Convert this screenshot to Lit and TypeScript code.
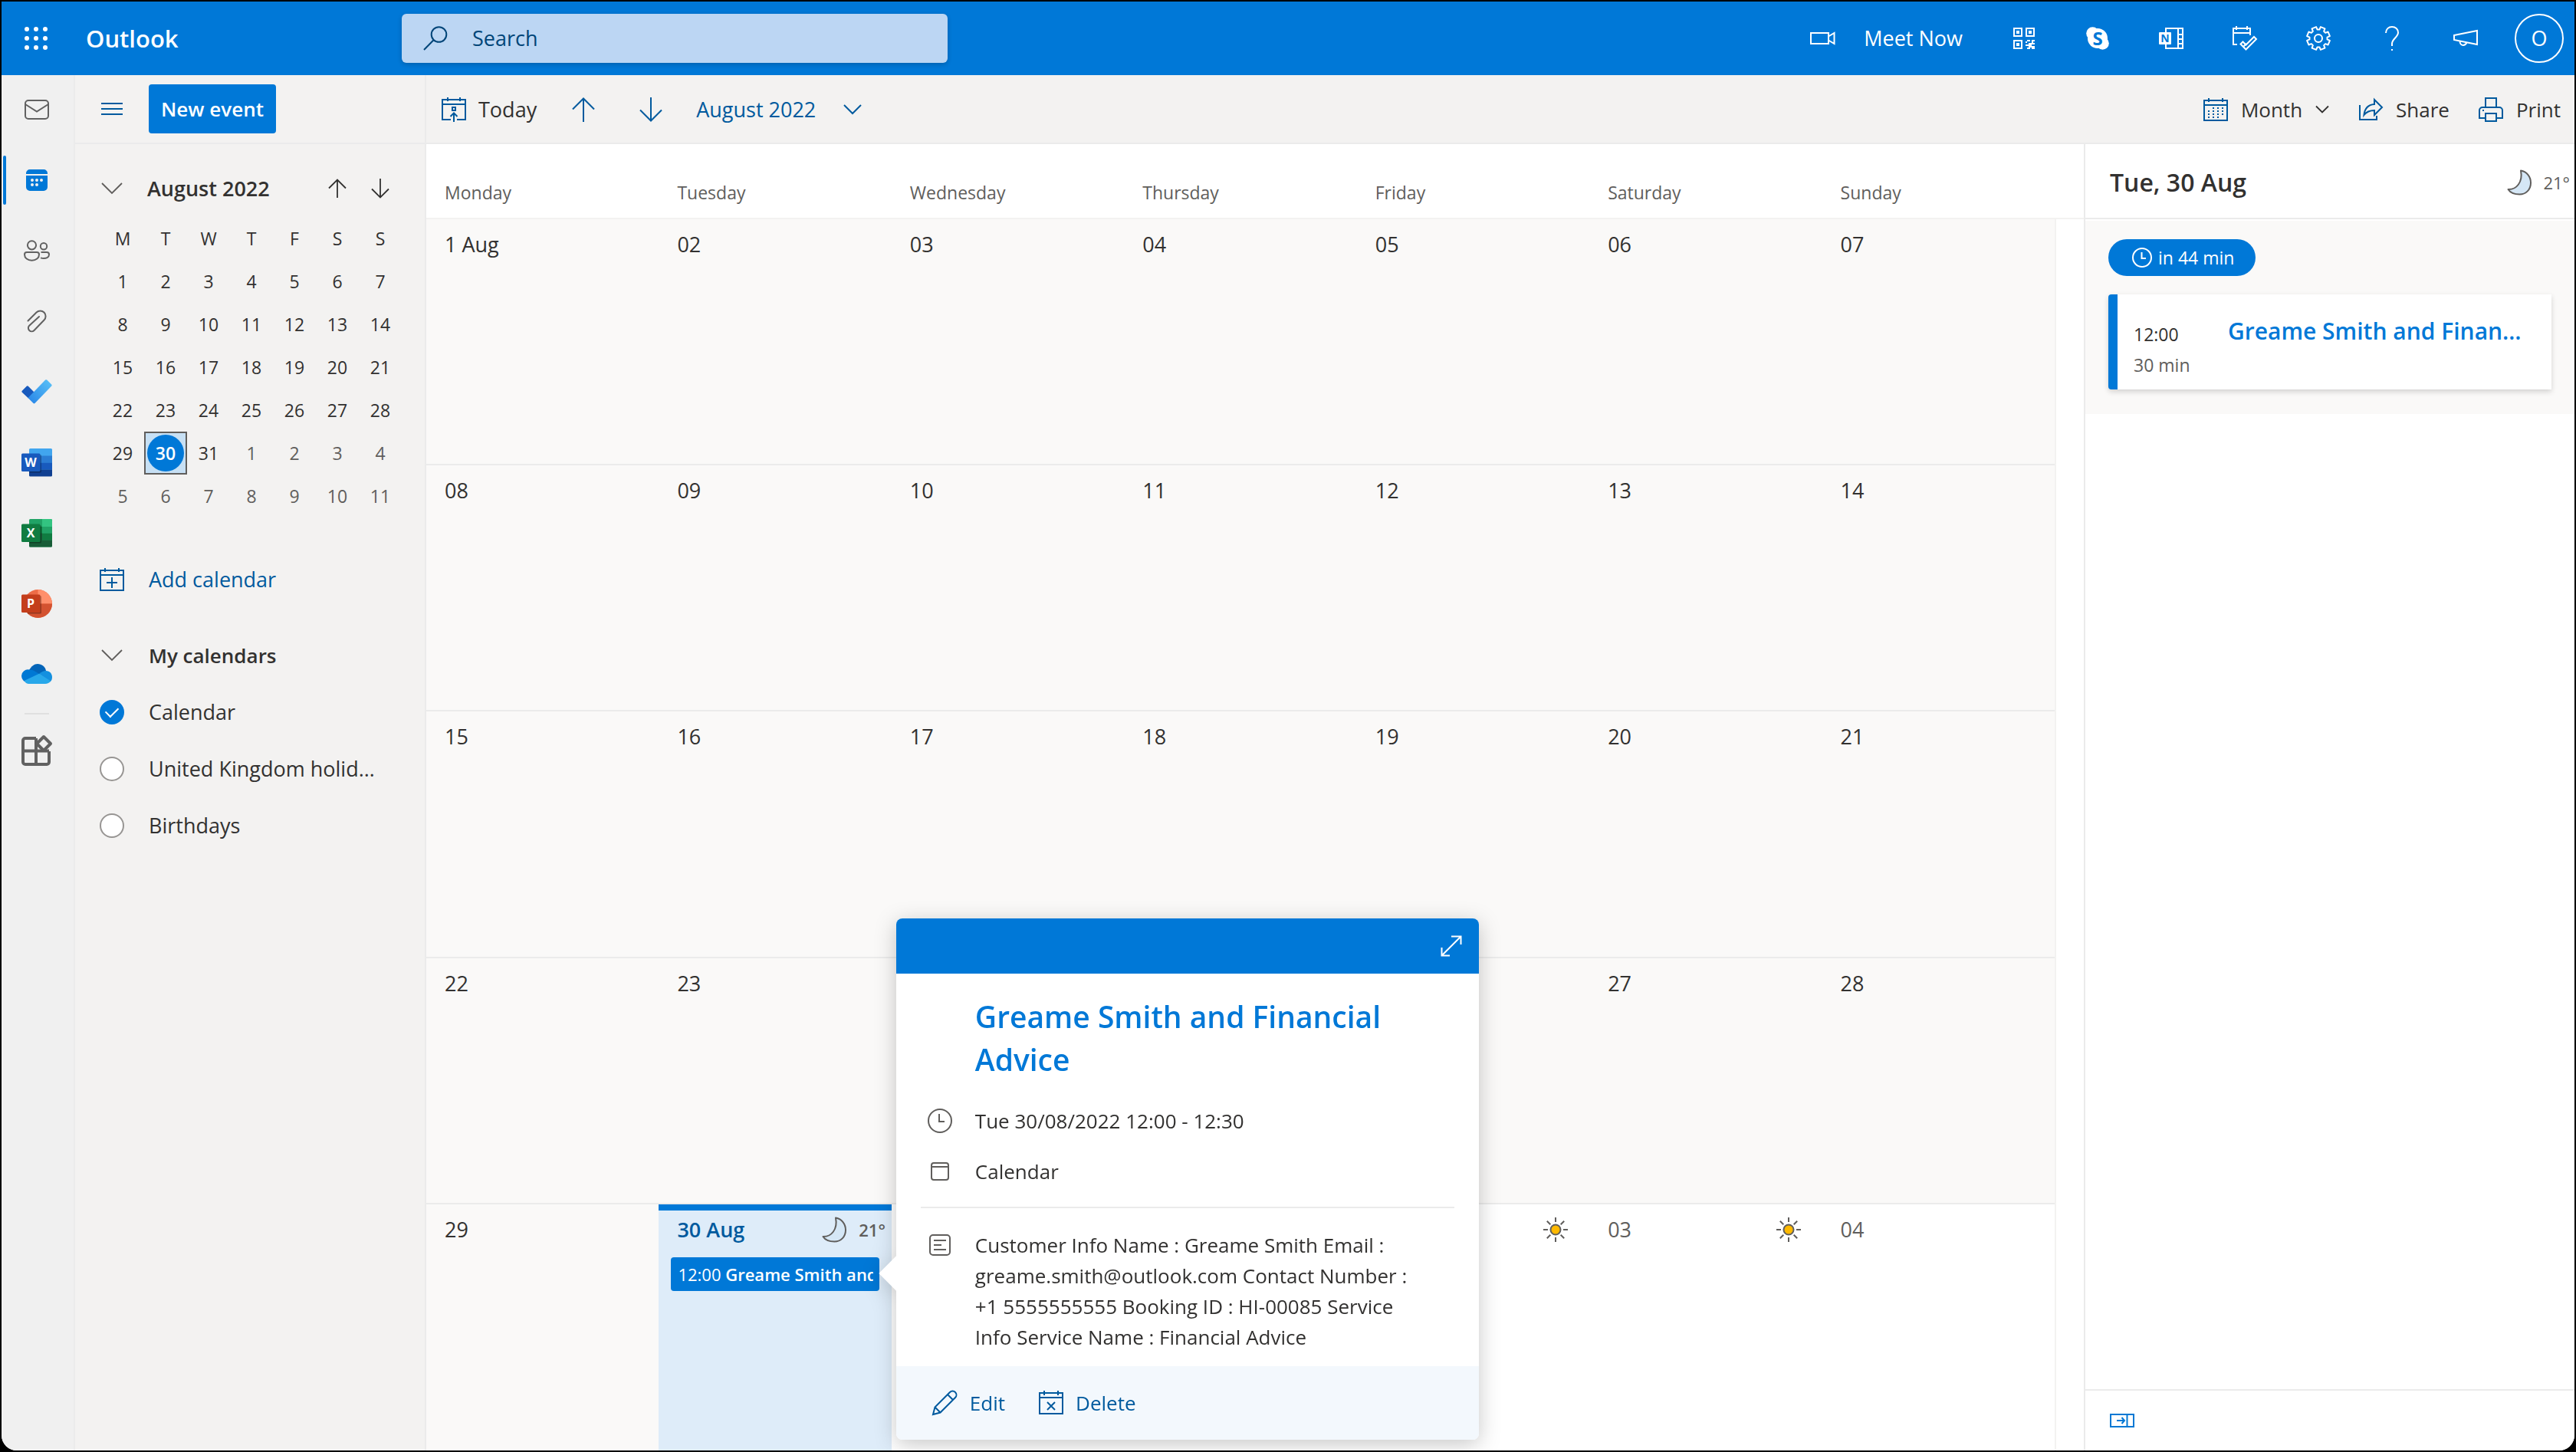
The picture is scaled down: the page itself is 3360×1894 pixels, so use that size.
import { LitElement, html, svg, css, nothing, type TemplateResult } from "lit";
import { customElement, state } from "lit/decorators.js";
import { classMap } from "lit/directives/class-map.js";

/* ---------- icons ---------- */

const icon = (w: number, h: number, body: unknown, cls = "") =>
  html`<svg class="icon ${cls}" width=${w} height=${h} viewBox="0 0 ${w} ${h}" fill="none"
    stroke="currentColor" stroke-width="2" aria-hidden="true">${body}</svg>`;

const gearOutline = (() => {
  const pts: string[] = [];
  const teeth = 8;
  for (let i = 0; i < teeth; i++) {
    const mid = (i * 2 * Math.PI) / teeth + Math.PI / 8;
    const steps: [number, number][] = [[-0.27, 11.6], [-0.2, 15.2], [0.2, 15.2], [0.27, 11.6]];
    for (const [da, r] of steps) {
      pts.push(`${(16 + r * Math.sin(mid + da)).toFixed(2)} ${(16 - r * Math.cos(mid + da)).toFixed(2)}`);
    }
  }
  return `M${pts.join("L")}Z`;
})();

const waffle = () =>
  icon(30, 30, svg`<g fill="currentColor" stroke="none">${[3, 15, 27].map((y) =>
    [3, 15, 27].map((x) => svg`<circle cx=${x} cy=${y} r="3"/>`))}</g>`);

const icons = {
  search: () => icon(32, 32, svg`<circle cx="20.5" cy="11" r="9.8"/><path d="M13.5 18.2L1 31"/>`),
  video: () => icon(34, 18, svg`<path d="M2 2h23v14H2zM25 6.5l7.5-4.5v14L25 11.5"/>`),
  qr: () => icon(28, 28, svg`<path d="M1 1h10v10H1zM17 1h10v10H17zM1 17h10v10H1z"/>
    <path fill="currentColor" stroke="none" d="M4 4h4v4H4zM20 4h4v4h-4zM4 20h4v4H4zM18 16h4v2h-4zM24 16h4v2h-2v2h-2zM16 18h2v2h-2zM20 18h2v2h4v2h-2v2h4v2h-2v2h-2v-2h-2v2h-4v-2h2v-2h-2v-2h2v-2h2v-2zM26 20h2v2h-2zM26 26h2v2h-2zM16 22h2v2h-2z"/>`),
  skype: () => icon(30, 30, svg`<g fill="currentColor" stroke="none"><circle cx="15" cy="15" r="13"/><circle cx="8.5" cy="8.5" r="8.3"/><circle cx="21.5" cy="21.5" r="8.3"/></g>
    <text class="logo-letter" x="15" y="23.5" font-size="24" fill="#0078d7" stroke="none">S</text>`),
  onenote: () => icon(32, 28, svg`<path d="M9 6V1h22v26H9v-5M25 1v26M25 9h6M25 15h6M25 21h6"/>
    <rect x="0" y="6" width="16" height="16" rx="1" fill="currentColor" stroke="none"/>
    <text class="logo-letter" x="8" y="19" font-size="14" fill="#0078d7" stroke="none">N</text>`),
  calendarCheck: () => icon(32, 32, svg`<path d="M6 24H1V3h22v9M1 9h22M5 0v5M19 0v5"/>
    <path d="M10.5 23.5l3-3 4 4L28 14l3 3-13.500 13.500z"/><path d="M14 27l4-4"/>`),
  gear: () => icon(32, 32, svg`<path stroke-linejoin="round" d=${gearOutline}/><circle cx="16" cy="16" r="5"/>`),
  help: () => icon(18, 32, svg`<path d="M1 9c0-5 3.500-8 8-8s8 3 8 7.500c0 6-8 8-8 14.500v3M9 30v2"/>`),
  megaphone: () => icon(32, 22, svg`<path d="M1 7l30-6v18L1 13zM8.500 15c0 3 2 5 4.500 5s3.500-1.500 4.500-3.500"/>`),
  mail: () => icon(32, 26, svg`<rect x="1" y="1" width="30" height="24" rx="4"/><path d="M1 6l15 9.500L31 6"/>`),
  calendarSolid: () => icon(28, 28, svg`<g stroke="none"><path fill="currentColor" d="M0 6V5a5 5 0 0 1 5-5h18a5 5 0 0 1 5 5v1zM0 8h28v15a5 5 0 0 1-5 5H5a5 5 0 0 1-5-5z"/>
    <g fill="#f0f0f0"><circle cx="8" cy="14" r="2"/><circle cx="14" cy="14" r="2"/><circle cx="20" cy="14" r="2"/><circle cx="8" cy="20" r="2"/><circle cx="14" cy="20" r="2"/></g></g>`),
  people: () => icon(34, 28, svg`<circle cx="10.500" cy="6.800" r="5.600"/><circle cx="26" cy="8.200" r="4.200"/>
    <path d="M4 16h13a3 3 0 0 1 3 3c0 4.500-4 7.800-9.500 7.800S1 23.500 1 19a3 3 0 0 1 3-3zM22.500 16H30a3 3 0 0 1 3 3c0 3.500-3.500 5-7 5-1.500 0-2.500-.2-4-.6"/>`),
  clip: () => icon(26, 30, svg`<path stroke-linecap="round" d="M1.500 14.500L12.500 3.500a7 7 0 0 1 10 10L9.500 27a4.400 4.400 0 0 1-6.300-6.300L16 9"/>`),
  todo: () => icon(40, 32, svg`<g stroke="none"><path fill="#185abd" d="M.8 14.800l6-6a1.500 1.500 0 0 1 2 0L17 17l-8 7.500-8.200-7.700a1.500 1.500 0 0 1 0-2z"/>
    <path fill="url(#todo-g)" d="M31.200.6a1.500 1.500 0 0 1 2 0l6 6a1.500 1.500 0 0 1 0 2L17.500 31a1.500 1.500 0 0 1-2 0L8.500 24z"/></g>
    <defs><linearGradient id="todo-g" x1="9" y1="28" x2="38" y2="2" gradientUnits="userSpaceOnUse"><stop stop-color="#2a87e8"/><stop offset="1" stop-color="#58c0f7"/></linearGradient></defs>`),
  word: () => icon(40, 37, svg`<g stroke="none"><rect x="10" width="30" height="36" rx="1.500" fill="#41a5ee"/><path fill="#2b7cd3" d="M10 9.500h30v9H10z"/><path fill="#185abd" d="M10 18.500h30v9H10z"/><path fill="#103f91" d="M10 27.500h30V35a1.500 1.500 0 0 1-1.500 1.500h-27A1.500 1.500 0 0 1 10 35z"/>
    <path fill="#000" opacity=".3" d="M10 8h14.500a1.500 1.500 0 0 1 1.500 1.500V30a1.500 1.500 0 0 1-1.500 1.500H10z"/><rect y="6.500" width="24.500" height="23.500" rx="1.500" fill="#185abd"/>
    <text class="logo-letter" x="12" y="24" font-size="16" fill="#fff">W</text></g>`),
  excel: () => icon(40, 37, svg`<g stroke="none"><rect x="10" width="30" height="36.500" rx="1.500" fill="#21a366"/><path fill="#33c481" d="M27 0h11.500A1.500 1.500 0 0 1 40 1.500V10H27z"/><path fill="#107c41" d="M27 18.500h13v9H27zM10 10h17v9H10z"/><path fill="#21a366" d="M27 10h13v8.500H27z"/><path fill="#185c37" d="M10 18.500h17v9h13V35a1.500 1.500 0 0 1-1.500 1.500h-27A1.500 1.500 0 0 1 10 35z"/>
    <path fill="#000" opacity=".3" d="M10 8h14.500a1.500 1.500 0 0 1 1.500 1.500V30a1.500 1.500 0 0 1-1.500 1.500H10z"/><rect y="6.500" width="24.500" height="23.500" rx="1.500" fill="#107c41"/>
    <text class="logo-letter" x="12" y="24" font-size="16" fill="#fff">X</text></g>`),
  powerpoint: () => icon(40, 37, svg`<g stroke="none"><circle cx="21.500" cy="18.500" r="18.500" fill="#ed6c47"/><path fill="#ff8f6b" d="M21.500 0A18.500 18.500 0 0 1 40 18.500H21.500z"/><path fill="#d35230" d="M3 18.500h37a18.500 18.500 0 0 1-37 0z"/>
    <path fill="#000" opacity=".3" d="M8 8h16.500a1.500 1.500 0 0 1 1.500 1.500V30a1.500 1.500 0 0 1-1.500 1.500H8z"/><rect y="6.500" width="24.500" height="23.500" rx="1.500" fill="#c43e1c"/>
    <text class="logo-letter" x="12" y="24" font-size="16" fill="#fff">P</text></g>`),
  onedrive: () => icon(40, 26, svg`<g stroke="none"><path fill="#0364b8" d="M10 8C13 3 16.500 0 21 0c5.500 0 10 3.500 11 9l-9 5z"/><path fill="#0078d4" d="M10 7.500c4 0 6 1 9 3l5 3L4 23a10 10 0 0 1-4-7.500 8.500 8.500 0 0 1 10-8z"/><path fill="#1490df" d="M32 9c5 0 8 4 8 8.500 0 2.500-1 4.500-2.500 6L23 13c3-2.500 6-4 9-4z"/><path fill="#28a8ea" d="M23 12.800l15 9.500c-1.500 2.500-4 3.700-7 3.700H9.500C7 26 5 24.800 3.500 22z"/></g>`),
  apps: () => icon(42, 42, svg`<g stroke-width="4" stroke-linejoin="round"><path d="M20 5H6a3 3 0 0 0-3 3v28a3 3 0 0 0 3 3h28a3 3 0 0 0 3-3V22M20 5v34M3 21.500h34"/><path fill="#f0f0f0" d="M30 3l9 9-9 9-9-9z"/></g>`),
  menu: () => icon(28, 18, svg`<path d="M0 2h28M0 9h28M0 16h28"/>`),
  chevronWide: () => icon(28, 16, svg`<path stroke="#605e5c" stroke-width="1.800" d="M1 1l13 13L27 1"/>`),
  chevronMid: () => icon(24, 16, svg`<path d="M1 2l11 11L23 2"/>`),
  chevronSmall: () => icon(18, 12, svg`<path stroke-width="1.800" d="M1 1.500l8 8 8-8"/>`),
  upSmall: () => icon(24, 26, svg`<path stroke-width="1.800" d="M12 25V2M1 12.500L12 1.500l11 11"/>`),
  downSmall: () => icon(24, 26, svg`<path stroke-width="1.800" d="M12 0v24M1 13.500l11 11 11-11"/>`),
  up: () => icon(30, 32, svg`<path d="M15 32V2M1 15.500l14-14 14 14"/>`),
  down: () => icon(30, 32, svg`<path d="M15 0v30M1 16.500l14 14 14-14"/>`),
  today: () => icon(32, 32, svg`<path d="M12 29H1V3h30v26H20M1 9h30M8 0v5M24 0v5M16 32V20.500M11.500 25l4.500-4.500 4.500 4.500M14 13h4v4h-4z"/>`),
  addCalendar: () => icon(32, 30, svg`<path d="M1 3h30v26H1zM1 9h30M7 0v5M25 0v5M16 12v14M9 19h14"/>`),
  deleteCalendar: () => icon(32, 32, svg`<path d="M1 3h30v27H1zM1 9h30M7 0v6M25 0v6M11 15l10 10M21 15L11 25"/>`),
  month: () => icon(32, 30, svg`<path d="M1 3h30v26H1zM1 9h30M7 0v5M25 0v5"/><g stroke-dasharray="2 4"><path d="M12 13h15M6 17h20M6 21h20M6 25h15"/></g>`),
  share: () => icon(32, 28, svg`<path d="M2 8v19h22v-5M21 1l10 10-10 10v-6c-6 0-10 1.500-13.500 6C8.500 12 13 7.500 21 7z"/>`),
  print: () => icon(32, 32, svg`<path d="M9 12V1h14v11M9 27H1V17a4 4 0 0 1 4-4h22a4 4 0 0 1 4 4v10h-8M9 21h14v10H9zM5 17h2"/>`),
  clock: () => icon(32, 32, svg`<circle cx="16" cy="16" r="15"/><path d="M15 7v10h7"/>`),
  clockSmall: () => icon(26, 26, svg`<circle cx="13" cy="13" r="12"/><path d="M12.500 6v8H18"/>`),
  calendarOutline: () => icon(24, 24, svg`<rect x="1" y="1" width="22" height="22" rx="3"/><path d="M1 6h22"/>`),
  notes: () => icon(28, 28, svg`<rect x="1" y="1" width="26" height="26" rx="4"/><path d="M6 8h16M6 14h10M6 20h16"/>`),
  pencil: () => icon(34, 34, svg`<path d="M2 32l2.500-9.500L24 3a4.500 4.500 0 0 1 7 7L11.500 29.500zM4.500 22.500l7 7M21 6l7 7"/>`),
  expand: () => icon(28, 28, svg`<path d="M2 26L26 2M14 1.500h12.500V12M1.500 16v10.500H12"/>`),
  collapse: () => icon(32, 18, svg`<path d="M1 1h30v16H1zM22.500 1v16M9 9h10M15.500 5L19 9l-3.500 4"/>`),
  moon: () => icon(32, 34, svg`<path fill="#d5e7f6" stroke="#605e5c" stroke-linejoin="round" d="M18 1.500c8 1.500 13 8 13 16 0 9-6.500 15-14.500 15C9.500 32.500 4 30 1.500 26 12 26.500 21 17 18 1.500z"/>`),
  sun: () => icon(32, 32, svg`<circle cx="16" cy="16" r="6.500" fill="#ffb900" stroke="#605e5c"/><path stroke="#605e5c" d="M16 0v6M16 26v6M0 16h6M26 16h6M4.800 4.800l4.500 4.500M22.700 22.700l4.500 4.500M27.200 4.800l-4.500 4.500M9.300 22.700l-4.500 4.500"/>`),
};

/* ---------- data ---------- */

const weekdays = ["Monday", "Tuesday", "Wednesday", "Thursday", "Friday", "Saturday", "Sunday"];
const miniDays = Array.from({ length: 42 }, (_, i) => (i < 31 ? i + 1 : i - 30));
const monthDays = Array.from({ length: 35 }, (_, i) => (i < 31 ? i + 1 : i - 30));
const weeks = <T,>(days: T[]) =>
  Array.from({ length: days.length / 7 }, (_, w) => days.slice(w * 7, w * 7 + 7));

const railApps: [string, () => TemplateResult][] = [
  ["Mail", icons.mail],
  ["Calendar", icons.calendarSolid],
  ["People", icons.people],
  ["Files", icons.clip],
  ["To Do", icons.todo],
  ["Word", icons.word],
  ["Excel", icons.excel],
  ["PowerPoint", icons.powerpoint],
  ["OneDrive", icons.onedrive],
];

const headerTools: [string, () => TemplateResult][] = [
  ["QR code", icons.qr],
  ["Skype", icons.skype],
  ["OneNote", icons.onenote],
  ["My Day", icons.calendarCheck],
  ["Settings", icons.gear],
  ["Help", icons.help],
  ["What's new", icons.megaphone],
];

/* ---------- shared styles ---------- */

const base = css`
  * { box-sizing: border-box; }
  button { font: inherit; color: inherit; background: none; border: 0; padding: 0; margin: 0; cursor: pointer;
    display: flex; align-items: center; white-space: nowrap; }
  h1, h2, h3, p { margin: 0; font: inherit; }
  .icon { display: block; flex: none; overflow: visible; }
  .logo-letter { font-family: "Open Sans", sans-serif; font-weight: 700; text-anchor: middle; }
`;

/* ---------- header ---------- */

@customElement("app-header")
class AppHeader extends LitElement {
  static styles = [base, css`
    :host { display: flex; align-items: center; height: 96px; background: #0078d7; color: #fff; }
    .waffle { width: 90px; height: 96px; justify-content: center; }
    .brand { width: 412px; padding-left: 20px; font-size: 31px; line-height: 48px; font-weight: 600; }
    .search { display: flex; align-items: center; gap: 32px; width: 712px; height: 64px; margin-left: 20px; padding: 0 28px;
      background: #bcd6f3; border-radius: 6px; color: #004578; box-shadow: 0 2px 6px rgba(0, 0, 0, .2); }
    .search input { flex: 1; min-width: 0; border: 0; outline: 0; padding: 0; background: none; font: inherit; color: inherit; }
    .search input::placeholder { color: #004578; opacity: 1; }
    .spacer { flex: 1; }
    .meet { gap: 37px; margin-right: 32px; }
    .tool { width: 96px; height: 96px; justify-content: center; }
    .avatar { width: 64px; height: 64px; margin: 0 14px 0 16px; justify-content: center;
      border: 2px solid #fff; border-radius: 50%; }
  `];

  render() {
    return html`
      <button class="waffle" aria-label="App launcher">${waffle()}</button>
      <h1 class="brand">Outlook</h1>
      <label class="search">${icons.search()}<input type="search" placeholder="Search" aria-label="Search" /></label>
      <div class="spacer"></div>
      <button class="meet">${icons.video()}<span>Meet Now</span></button>
      ${headerTools.map(([name, draw]) => html`<button class="tool" aria-label=${name}>${draw()}</button>`)}
      <button class="avatar" aria-label="Account">O</button>`;
  }
}

/* ---------- app rail ---------- */

@customElement("app-rail")
class AppRail extends LitElement {
  static styles = [base, css`
    :host { display: flex; flex-direction: column; align-items: stretch; gap: 2px; width: 96px; flex: none;
      background: #f0f0f0; border-right: 2px solid #ebebeb; color: #616161; }
    .item { position: relative; height: 90px; justify-content: center; padding-right: 2px; }
    .active { color: #0078d7; }
    .active::before { content: ""; position: absolute; left: 2px; top: 13px; width: 4px; height: 64px;
      border-radius: 2px; background: #0078d7; }
    .divider { width: 32px; height: 2px; margin: 4px 0 0 30px; border: 0; background: #e0e0e0; }
  `];

  render() {
    return html`
      ${railApps.map(([name, draw]) => html`
        <button class=${classMap({ item: true, active: name === "Calendar" })} aria-label=${name}>${draw()}</button>`)}
      <hr class="divider" />
      <button class="item" aria-label="More apps">${icons.apps()}</button>`;
  }
}

/* ---------- left pane ---------- */

@customElement("calendar-sidebar")
class CalendarSidebar extends LitElement {
  @state() private calendars = [
    { name: "Calendar", on: true },
    { name: "United Kingdom holidays", on: false },
    { name: "Birthdays", on: false },
  ];

  static styles = [base, css`
    :host { display: block; width: 458px; flex: none; background: #f3f2f1; border-right: 2px solid #ebebeb; }
    .bar { display: flex; align-items: center; gap: 34px; height: 90px; padding-left: 34px; border-bottom: 2px solid #ebebeb; }
    .menu { color: #005a9e; }
    .new { height: 64px; padding: 0 16px; background: #0078d7; color: #fff; border-radius: 4px; font-size: var(--body); font-weight: 600; }
    .head { display: flex; align-items: center; height: 68px; margin: 24px 0 3px 34px; }
    .title { margin-left: 32px; flex: 1; font-weight: 600; }
    .arrow { width: 56px; height: 56px; justify-content: center; }
    .pager { display: flex; padding-right: 30px; }
    .mini { margin-left: 34px; width: 392px; border-collapse: collapse; table-layout: fixed; font-size: var(--small); }
    .mini th, .mini td { width: 56px; height: 56px; padding: 0; font-weight: 400; text-align: center; }
    .day { width: 56px; height: 56px; justify-content: center; }
    .other { color: #605e5c; }
    .today { background: #c7e0f4; border: 2px solid #605e5c; color: #fff; font-weight: 600; }
    .disc { display: flex; align-items: center; justify-content: center; flex: none; width: 48px; height: 48px; border-radius: 50%; background: #0078d7; }
    .row { display: grid; grid-template-columns: 32px 1fr; gap: 32px; align-items: center; width: 100%; height: 74px; padding: 0 62px 0 32px; text-align: left; }
    .row .icon { justify-self: center; }
    .add { margin: 44px 0 25px; color: #005a9e; }
    .group { font-size: var(--body); font-weight: 600; }
    .name { overflow: hidden; text-overflow: ellipsis; white-space: nowrap; }
    .check { appearance: none; margin: 0; width: 32px; height: 32px; border: 2px solid #979593; border-radius: 50%; background: #fff; display: grid; place-items: center; }
    .check:checked { background: #0078d7; border-color: #0078d7; }
    .check:checked::after { content: ""; width: 14px; height: 8px; margin-bottom: 4px; border: solid #fff; border-width: 0 0 2px 2px; transform: rotate(-45deg); }
  `];

  render() {
    return html`
      <div class="bar">
        <button class="menu" aria-label="Toggle pane">${icons.menu()}</button>
        <button class="new">New event</button>
      </div>
      <div class="head">
        <button aria-label="Collapse">${icons.chevronWide()}</button>
        <h2 class="title">August 2022</h2>
        <div class="pager">
          <button class="arrow" aria-label="Previous month">${icons.upSmall()}</button>
          <button class="arrow" aria-label="Next month">${icons.downSmall()}</button>
        </div>
      </div>
      <table class="mini">
        <thead><tr>${weekdays.map((d) => html`<th scope="col">${d[0]}</th>`)}</tr></thead>
        <tbody>${weeks(miniDays).map((week, w) => html`<tr>${week.map((d, i) => {
          const index = w * 7 + i;
          const today = index === 29;
          return html`<td><button class=${classMap({ day: true, today, other: index > 30 })}>${
            today ? html`<span class="disc">${d}</span>` : d}</button></td>`;
        })}</tr>`)}</tbody>
      </table>
      <button class="row add">${icons.addCalendar()}<span>Add calendar</span></button>
      <button class="row group">${icons.chevronWide()}<span>My calendars</span></button>
      ${this.calendars.map((c, i) => html`
        <label class="row">
          <input class="check" type="checkbox" .checked=${c.on} @change=${() => this.toggle(i)} />
          <span class="name">${c.name}</span>
        </label>`)}`;
  }

  private toggle(index: number) {
    this.calendars = this.calendars.map((c, i) => (i === index ? { ...c, on: !c.on } : c));
  }
}

/* ---------- event card ---------- */

@customElement("event-card")
class EventCard extends LitElement {
  static styles = [base, css`
    :host { display: block; width: 760px; color: #323130; font-size: var(--body); filter: drop-shadow(0 6px 14px rgba(0, 0, 0, .22)); cursor: default; }
    .tip { position: absolute; left: -16px; bottom: 201px; width: 32px; height: 32px; background: #fff; transform: rotate(45deg); }
    .card { position: relative; background: #fff; border-radius: 8px; overflow: hidden; }
    .top { display: flex; justify-content: flex-end; align-items: center; height: 72px; padding-right: 22px; background: #0078d7; color: #fff; }
    .title { padding: 28px 60px 0 103px; font-size: 39px; line-height: 56px; font-weight: 600; color: #0078d7; }
    .line { display: grid; grid-template-columns: 32px 1fr; column-gap: 30px; align-items: center; padding: 0 74px 0 41px; line-height: 40px; }
    .line .icon { justify-self: center; color: #605e5c; }
    .lines { display: grid; gap: 26px; padding-top: 32px; }
    .rule { height: 2px; margin: 26px 32px 28px; border: 0; background: #ebebeb; }
    .notes { align-items: start; }
    .notes .icon { margin-top: 6px; }
    .actions { display: flex; align-items: center; gap: 44px; height: 96px; margin-top: 18px; padding-left: 46px; background: #f3f8fd; color: #005a9e; }
    .action { gap: 16px; }
  `];

  render() {
    return html`
      <div class="tip"></div>
      <div class="card">
        <div class="top"><button aria-label="Expand">${icons.expand()}</button></div>
        <h3 class="title">Greame Smith and Financial Advice</h3>
        <div class="lines">
          <div class="line">${icons.clock()}<span>Tue 30/08/2022 12:00 - 12:30</span></div>
          <div class="line">${icons.calendarOutline()}<span>Calendar</span></div>
        </div>
        <hr class="rule" />
        <div class="line notes">${icons.notes()}<p>Customer Info Name : Greame Smith Email : greame.smith@outlook.com Contact Number : +1 5555555555 Booking ID : HI-00085 Service Info Service Name : Financial Advice</p></div>
        <div class="actions">
          <button class="action">${icons.pencil()}<span>Edit</span></button>
          <button class="action">${icons.deleteCalendar()}<span>Delete</span></button>
        </div>
      </div>`;
  }
}

/* ---------- month grid ---------- */

@customElement("month-grid")
class MonthGrid extends LitElement {
  static styles = [base, css`
    :host { display: flex; flex: 1; min-width: 0; background: #fff; }
    .month { display: flex; flex-direction: column; flex: 1; min-width: 0; }
    .names { display: block; height: 98px; padding: 42px 38px 0 0; border-bottom: 2px solid #f3f2f1; font-size: var(--small); color: #605e5c; }
    .week { display: grid; grid-template-columns: repeat(7, minmax(0, 1fr)); }
    .names th { padding: 0 0 0 24px; line-height: 42px; font-weight: 400; text-align: left; }
    .weeks { display: grid; flex: 1; grid-auto-rows: minmax(0, 1fr); margin-right: 36px; border-right: 2px solid #f3f2f1; }
    .weeks .week { border-bottom: 2px solid #ebebeb; }
    .weeks .week:last-child { border-bottom: 0; }
    .cell { position: relative; padding: 0; }
    .past { background: #faf9f8; }
    .next { color: #605e5c; }
    .label { display: flex; align-items: center; padding: 13px 8px 0 24px; line-height: 40px; }
    .num { flex: 1; }
    .sun { padding-right: 20px; }
    .today { background: #deecf9; box-shadow: inset 0 8px #0078d7; }
    .today .num { color: #005a9e; font-weight: 600; }
    .temp { margin-left: 16px; font-size: 22px; font-weight: 600; color: #605e5c; }
    .event { display: block; width: calc(100% - 32px); height: 44px; margin: 16px 16px 0; padding: 0 8px 0 9px; border-radius: 4px;
      background: #0078d7; color: #fff; font-size: 22px; line-height: 44px; text-align: left; }
    .clip { display: block; overflow: hidden; }
    .event b { font-weight: 600; }
    .popover { position: absolute; z-index: 2; left: calc(100% + 6px); bottom: 14px; }
  `];

  private cell(day: number, index: number) {
    const today = index === 29;
    const text = index === 0 ? "1 Aug" : today ? "30 Aug" : String(day).padStart(2, "0");
    return html`<td class=${classMap({ cell: true, past: index < 29, today, next: index > 30 })}>
      <div class="label">
        <span class="num">${text}</span>
        ${today ? html`${icons.moon()}<span class="temp">21°</span>` : nothing}
        ${index === 32 || index === 33 ? html`<span class="sun">${icons.sun()}</span>` : nothing}
      </div>
      ${today ? html`
        <button class="event"><span class="clip">12:00 <b>Greame Smith and Financial Advice</b></span></button>
        <event-card class="popover"></event-card>` : nothing}
    </td>`;
  }

  render() {
    return html`
      <table class="month">
        <thead class="names"><tr class="week">${weekdays.map((d) => html`<th scope="col">${d}</th>`)}</tr></thead>
        <tbody class="weeks">${weeks(monthDays).map((week, w) => html`
          <tr class="week">${week.map((d, i) => this.cell(d, w * 7 + i))}</tr>`)}</tbody>
      </table>`;
  }
}

/* ---------- agenda ---------- */

@customElement("agenda-pane")
class AgendaPane extends LitElement {
  static styles = [base, css`
    :host { display: flex; flex-direction: column; width: 640px; flex: none; background: #fff; border-left: 2px solid #ebebeb; }
    .head { display: flex; align-items: center; height: 98px; padding: 4px 6px 0 32px; border-bottom: 2px solid #ebebeb; }
    .title { flex: 1; font-size: 32px; line-height: 44px; font-weight: 600; }
    .temp { margin-left: 15px; font-size: 22px; color: #605e5c; }
    .list { margin-top: 2px; padding: 24px 30px 32px; background: #faf9f8; }
    .pill { display: inline-flex; align-items: center; gap: 8px; height: 48px; padding: 0 28px 0 31px; border-radius: 24px; background: #0078d7; color: #fff; font-size: var(--small); }
    .card { display: grid; grid-template-columns: 123px 1fr; width: 100%; height: 124px; margin-top: 24px; padding: 28px 34px 0 21px; align-items: start;
      background: #fff; border-left: 12px solid #0078d7; border-radius: 4px 0 0 4px; box-shadow: 0 3px 7px rgba(0, 0, 0, .16); text-align: left; font-size: var(--small); }
    .when { padding-top: 4px; line-height: 40px; }
    .length { color: #605e5c; display: block; }
    .name { overflow: hidden; text-overflow: ellipsis; white-space: nowrap; font-size: 30px; line-height: 40px; font-weight: 600; color: #0078d7; }
    .spacer { flex: 1; }
    .foot { display: flex; align-items: center; height: 80px; padding-left: 32px; border-top: 2px solid #ebebeb; color: #0078d4; }
  `];

  render() {
    return html`
      <div class="head"><h2 class="title">Tue, 30 Aug</h2>${icons.moon()}<span class="temp">21°</span></div>
      <div class="list">
        <div class="pill">${icons.clockSmall()}<span>in 44 min</span></div>
        <button class="card">
          <span class="when">12:00<span class="length">30 min</span></span>
          <span class="name">Greame Smith and Financial Advice</span>
        </button>
      </div>
      <div class="spacer"></div>
      <div class="foot"><button aria-label="Close pane">${icons.collapse()}</button></div>`;
  }
}

/* ---------- page ---------- */

@customElement("app-root")
class AppRoot extends LitElement {
  static styles = [base, css`
    :host { --small: 23px; --body: 26px; display: flex; min-height: 100vh; padding: 2px; box-sizing: border-box; background: #000;
      font: 27px/40px "Open Sans", "Noto Sans", sans-serif; color: #323130; }
    .app { display: flex; flex-direction: column; flex: 1; min-width: 0; background: #fff; border-radius: 0 0 20px 20px; overflow: hidden; }
    .body { display: flex; flex: 1; }
    .main { display: flex; flex-direction: column; flex: 1; min-width: 0; }
    .bar { display: flex; align-items: center; height: 90px; padding: 2px 18px 0 20px; background: #f3f2f1; border-bottom: 2px solid #ebebeb; }
    .blue { color: #005a9e; }
    .bar .icon { color: #005a9e; }
    .today { gap: 16px; }
    .step { width: 88px; height: 64px; justify-content: center; }
    .steps { display: flex; margin-left: 17px; }
    .range { gap: 36px; margin-left: 15px; }
    .spacer { flex: 1; }
    .actions { display: flex; gap: 38px; font-size: var(--body); }
    .action { gap: 17px; }
    .action .chevron { display: block; }
    .action .chevron .icon { color: #323130; }
    .content { display: flex; flex: 1; }
  `];

  render() {
    return html`
      <div class="app">
        <app-header></app-header>
        <div class="body">
          <app-rail></app-rail>
          <calendar-sidebar></calendar-sidebar>
          <main class="main">
            <div class="bar">
              <button class="today">${icons.today()}<span>Today</span></button>
              <div class="steps">
                <button class="step" aria-label="Previous month">${icons.up()}</button>
                <button class="step" aria-label="Next month">${icons.down()}</button>
              </div>
              <button class="range blue"><span>August 2022</span>${icons.chevronMid()}</button>
              <div class="spacer"></div>
              <div class="actions">
                <button class="action">${icons.month()}<span>Month</span><span class="chevron">${icons.chevronSmall()}</span></button>
                <button class="action">${icons.share()}<span>Share</span></button>
                <button class="action">${icons.print()}<span>Print</span></button>
              </div>
            </div>
            <div class="content">
              <month-grid></month-grid>
              <agenda-pane></agenda-pane>
            </div>
          </main>
        </div>
      </div>`;
  }
}
